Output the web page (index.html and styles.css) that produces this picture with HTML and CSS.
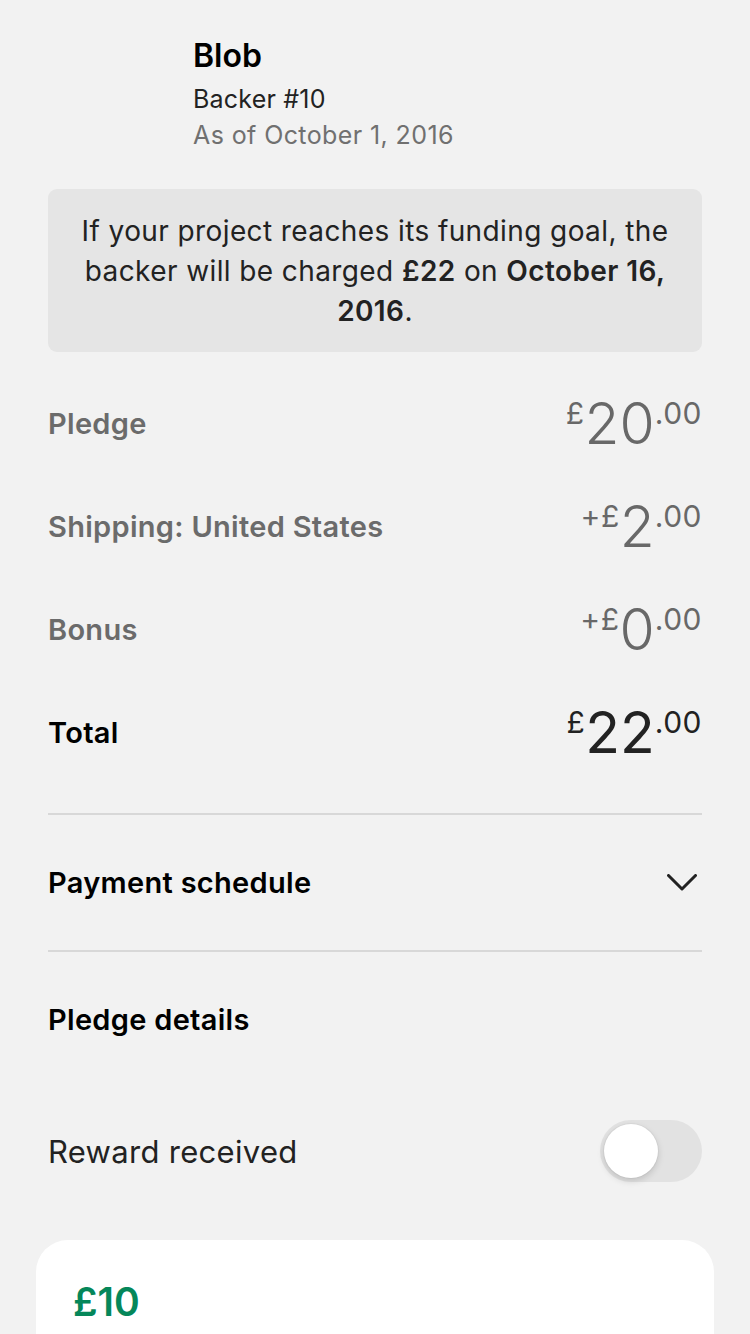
FILE: index.html
```html
<!DOCTYPE html>
<html lang="en">
<head>
<meta charset="utf-8">
<title>Pledge</title>
<link rel="stylesheet" href="styles.css">
</head>
<body>
<main class="page">
  <header class="backer">
    <div class="backer-name">Blob</div>
    <div class="backer-number">Backer #10</div>
    <div class="backer-date">As of October 1, 2016</div>
  </header>

  <section class="notice">
    If your project reaches its funding goal, the backer will be charged <strong>£22</strong> on <strong>October 16, 2016</strong>.
  </section>

  <section class="summary">
    <div class="line">
      <span class="line-label">Pledge</span>
      <span class="amount"><span class="amt-small">£</span><span class="amt-big">20</span><span class="amt-small">.00</span></span>
    </div>
    <div class="line">
      <span class="line-label">Shipping: United States</span>
      <span class="amount"><span class="amt-small">+£</span><span class="amt-big">2</span><span class="amt-small">.00</span></span>
    </div>
    <div class="line">
      <span class="line-label">Bonus</span>
      <span class="amount"><span class="amt-small">+£</span><span class="amt-big">0</span><span class="amt-small">.00</span></span>
    </div>
    <div class="line line-total">
      <span class="line-label">Total</span>
      <span class="amount"><span class="amt-small">£</span><span class="amt-big">22</span><span class="amt-small">.00</span></span>
    </div>
  </section>

  <section class="schedule">
    <span class="section-title">Payment schedule</span>
    <svg class="chevron" width="30" height="18" viewBox="0 0 30 18" aria-hidden="true">
      <polyline points="1.5,1.5 15,15 28.5,1.5" fill="none" stroke="#222" stroke-width="3" stroke-linecap="round" stroke-linejoin="round"/>
    </svg>
  </section>

  <section class="details">
    <div class="details-title"><span class="section-title">Pledge details</span></div>
    <div class="reward-row">
      <span class="reward-label">Reward received</span>
      <span class="toggle"><span class="toggle-knob"></span></span>
    </div>
  </section>

  <section class="reward-card">
    <div class="reward-price">£10</div>
  </section>
</main>
</body>
</html>
```

FILE: styles.css
```css
html, body {
  margin: 0;
  padding: 0;
}

body {
  background: #f2f2f2;
  font-family: "Inter", "Noto Sans", "Liberation Sans", sans-serif;
  color: #111;
  width: 750px;
  height: 1334px;
  overflow: hidden;
}

.page {
  padding: 0 48px;
}

.backer {
  padding: 36px 0 0 145px;
  display: flex;
  flex-direction: column;
}

.backer-name {
  font-size: 32px;
  font-weight: 600;
  line-height: 40px;
  color: #000;
}

.backer-number {
  margin-top: 5px;
  font-size: 25px;
  line-height: 36px;
  letter-spacing: 0.2px;
  color: #222;
}

.backer-date {
  font-size: 25px;
  line-height: 36px;
  letter-spacing: 0.4px;
  color: #707070;
}

.notice {
  margin-top: 36px;
  background: #e5e5e5;
  border-radius: 9px;
  padding: 22px 24px 21px;
  font-size: 28px;
  line-height: 40px;
  letter-spacing: 0.4px;
  text-align: center;
  color: #222;
}

.notice strong {
  font-weight: 600;
}

.summary {
  margin-top: 20px;
  display: flex;
  flex-direction: column;
}

.line {
  height: 103px;
  display: flex;
  align-items: center;
  justify-content: space-between;
}

.line-label {
  font-size: 29px;
  font-weight: 600;
  letter-spacing: 0.3px;
  color: #6b6b6b;
}

.amount {
  display: flex;
  align-items: flex-start;
  color: #686868;
}

.amt-big {
  font-size: 57px;
  font-weight: 300;
  line-height: 1;
}

.amt-small {
  font-size: 30px;
  font-weight: 400;
  line-height: 1;
  margin-top: 3px;
  letter-spacing: 0.5px;
}

.line-total .line-label {
  color: #000;
}

.line-total .amount {
  color: #222;
}

.line-total .amt-big {
  font-weight: 400;
}

.schedule {
  margin-top: 29px;
  border-top: 2px solid #d8d8d8;
  border-bottom: 2px solid #d8d8d8;
  height: 135px;
  display: flex;
  align-items: center;
  justify-content: space-between;
}

.section-title {
  font-size: 29px;
  font-weight: 600;
  letter-spacing: 0.3px;
  color: #000;
}

.chevron {
  margin-right: 5px;
}

.details-title {
  height: 134px;
  display: flex;
  align-items: center;
}

.reward-row {
  height: 130px;
  display: flex;
  align-items: center;
  justify-content: space-between;
}

.reward-label {
  font-size: 31px;
  letter-spacing: 0.3px;
  color: #222;
}

.toggle {
  width: 102px;
  height: 62px;
  border-radius: 31px;
  background: #e2e2e2;
  display: flex;
  align-items: center;
  padding: 0 4px;
  box-sizing: border-box;
}

.toggle-knob {
  width: 54px;
  height: 54px;
  border-radius: 50%;
  background: #fff;
  box-shadow: 0 3px 7px rgba(0, 0, 0, 0.15), 0 0 0 1px rgba(0, 0, 0, 0.03);
}

.reward-card {
  margin: 24px -12px 0;
  background: #fff;
  border-radius: 32px 32px 0 0;
  padding: 38px 37px 60px;
}

.reward-price {
  font-size: 39px;
  font-weight: 600;
  line-height: 48px;
  color: #05875a;
}
```
